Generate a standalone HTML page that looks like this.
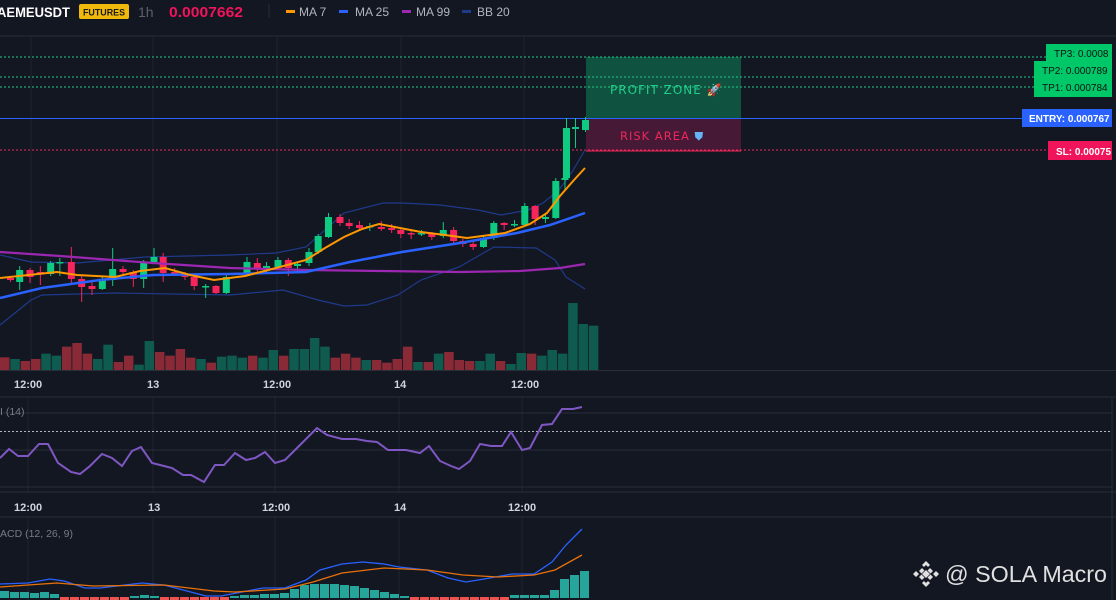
<!DOCTYPE html>
<html><head><meta charset="utf-8"><style>
html,body{margin:0;padding:0;background:#131722;width:1116px;height:600px;overflow:hidden;font-family:"Liberation Sans",sans-serif}
svg{position:absolute;left:0;top:0}
</style></head><body>
<svg id="s" width="1116" height="600" xmlns="http://www.w3.org/2000/svg">
<rect width="1116" height="600" fill="#131722"/>
<line x1="0" y1="36" x2="1116" y2="36" stroke="#2a2e39"/>
<g stroke="#1f2330">
<line x1="31" y1="36" x2="31" y2="370"/><line x1="153" y1="36" x2="153" y2="370"/><line x1="277" y1="36" x2="277" y2="370"/><line x1="401" y1="36" x2="401" y2="370"/><line x1="524" y1="36" x2="524" y2="370"/>
<line x1="28" y1="397" x2="28" y2="492"/><line x1="153" y1="397" x2="153" y2="492"/><line x1="275" y1="397" x2="275" y2="492"/><line x1="399" y1="397" x2="399" y2="492"/><line x1="522" y1="397" x2="522" y2="492"/>
<line x1="28" y1="517" x2="28" y2="600"/><line x1="153" y1="517" x2="153" y2="600"/><line x1="275" y1="517" x2="275" y2="600"/><line x1="399" y1="517" x2="399" y2="600"/><line x1="522" y1="517" x2="522" y2="600"/>
</g>
<line x1="0" y1="397" x2="1116" y2="397" stroke="#2a2e39"/>
<line x1="0" y1="492" x2="1116" y2="492" stroke="#2a2e39"/>
<line x1="0" y1="517" x2="1116" y2="517" stroke="#2a2e39"/>
<line x1="1112" y1="397" x2="1112" y2="600" stroke="#2a2e39"/>
<line x1="0" y1="413" x2="1112" y2="413" stroke="#2a2e39"/>
<line x1="0" y1="450" x2="1112" y2="450" stroke="#2a2e39"/>
<line x1="0" y1="487" x2="1112" y2="487" stroke="#2a2e39"/>
<line x1="0" y1="431.5" x2="1112" y2="431.5" stroke="#b2b5be" stroke-dasharray="2 2" stroke-width="1"/>
<!-- zones -->
<rect x="586" y="57" width="155" height="61" fill="#0f5240"/>
<rect x="586" y="118" width="155" height="33" fill="#461a36"/>
<g stroke-dasharray="2 2">
<line x1="0" y1="57" x2="1046" y2="57" stroke="#26c88a"/>
<line x1="0" y1="77" x2="1034" y2="77" stroke="#26c88a"/>
<line x1="0" y1="87" x2="1034" y2="87" stroke="#26c88a"/>
<line x1="0" y1="150" x2="1048" y2="150" stroke="#f0265a"/>
</g>
<line x1="586" y1="151" x2="741" y2="151" stroke="#f0265a"/>
<line x1="0" y1="118.5" x2="1022" y2="118.5" stroke="#2962ff"/>
<text x="610" y="94" fill="#1fd08a" font-size="12" font-family="DejaVu Sans" letter-spacing="1">PROFIT ZONE 🚀</text>
<text x="620" y="140" fill="#f0265a" font-size="11.5" font-family="DejaVu Sans" letter-spacing="1">RISK AREA <tspan fill="#64b5f6">⛊</tspan></text>
<rect x="1046" y="44" width="66" height="17" fill="#00c868"/>
<rect x="1034" y="61" width="78" height="36" fill="#00c868"/>
<rect x="1022" y="109" width="90" height="18" fill="#2962ff"/>
<rect x="1048" y="141" width="64" height="19" fill="#f0145a"/>
<g font-size="10" fill="#111">
<text x="1054" y="57">TP3: 0.0008</text>
<text x="1042" y="74">TP2: 0.000789</text>
<text x="1042" y="91">TP1: 0.000784</text>
</g>
<g font-size="10" fill="#fff" font-weight="bold">
<text x="1029" y="122">ENTRY: 0.000767</text>
<text x="1056" y="155">SL: 0.00075</text>
</g>
<g id="vol"></g><g id="bb" fill="none" stroke="#1f3a8a" stroke-width="1.2"></g>
<g id="c"></g>
<polyline fill="none" stroke="#9c27b0" stroke-width="2.2" points="0,252 60,256 153,263 230,268 306,270 380,271 459,272 520,271 560,268 585,264"/>
<polyline fill="none" stroke="#2962ff" stroke-width="2.5" points="0,298 42,288 100,280 153,275 230,274 306,272 350,262 402,252 460,243 517,233 550,225 585,213"/>
<polyline fill="none" stroke="#ff9800" stroke-width="2" points="0,278 57,272 77,275 115,277 140,271 165,268 190,275 214,280 245,276 276,268 306,260 325,248 344,237 362,229 379,224 400,228 421,232 445,235 467,238 505,233 530,224 547,213 560,196 574,180 585,168"/>
<polyline fill="none" stroke="#7e57c2" stroke-width="2" points="0,458 9,449 18,456 28,456 39,444 48,444 58,463 71,472 80,474 90,466 102,454 112,458 122,466 132,451 141,447 152,463 164,466 172,468 183,475 191,475 204,482 215,465 224,465 235,453 246,460 255,458 265,452 275,463 285,460 298,447 317,428 327,435 342,439 356,439 367,441 377,442 388,450 406,450 420,453 429,446 440,461 451,466 459,469 470,461 480,444 491,446 502,446 511,432 522,450 530,448 542,425 552,424 562,409 573,409 582,407"/>
<!-- MACD -->
<g id="mh"></g>
<polyline fill="none" stroke="#2962ff" stroke-width="1.3" points="0,584 28,583 50,579 64,581 85,588 100,588 142,583 164,585 206,596 221,596 263,588 285,588 306,580 320,570 342,564 363,562 384,564 399,567 427,570 448,578 466,582 484,579 512,574 534,574 552,562 566,545 582,529"/>
<polyline fill="none" stroke="#e8710a" stroke-width="1.3" points="0,587 28,585 57,583 93,586 164,585 214,591 235,592 285,589 313,582 342,573 384,568 427,570 463,575 498,577 534,575 555,570 582,555"/>
<!-- text -->
<g font-size="11" fill="#d1d4dc" font-weight="bold">
<text x="14" y="388">12:00</text><text x="147" y="388">13</text><text x="263" y="388">12:00</text><text x="394" y="388">14</text><text x="511" y="388">12:00</text>
<text x="14" y="511">12:00</text><text x="148" y="511">13</text><text x="262" y="511">12:00</text><text x="394" y="511">14</text><text x="508" y="511">12:00</text>
</g>
<text x="0" y="415" fill="#787b86" font-size="10.5">I (14)</text>
<text x="0" y="537" fill="#787b86" font-size="10.5">ACD (12, 26, 9)</text>
<g fill="#e0e0e0" transform="translate(926,574)">
<path d="M0,-13 L4,-9 L2,-7 L0,-9 L-2,-7 L-4,-9Z M0,13 L4,9 L2,7 L0,9 L-2,7 L-4,9Z M-13,0 L-10,-3 L-7,0 L-10,3Z M13,0 L10,-3 L7,0 L10,3Z M0,-4 L4,0 L0,4 L-4,0Z M-7,-3 L-4,-6 L-1.5,-3.5 L-4.5,-0.5Z M7,-3 L4,-6 L1.5,-3.5 L4.5,-0.5Z M-7,3 L-4,6 L-1.5,3.5 L-4.5,0.5Z M7,3 L4,6 L1.5,3.5 L4.5,0.5Z"/>
</g>
<text x="945" y="582" fill="#e0e0e0" font-size="23" textLength="162" lengthAdjust="spacingAndGlyphs">@ SOLA Macro</text>
<!-- header -->
<text x="-3" y="17" fill="#ffffff" font-size="14" font-weight="bold" textLength="73" lengthAdjust="spacingAndGlyphs">AEMEUSDT</text>
<rect x="79" y="4" width="50" height="15" rx="2" fill="#f0b90b"/>
<text x="83" y="15.5" fill="#1b1b1b" font-size="9" font-weight="bold" textLength="42" lengthAdjust="spacingAndGlyphs">FUTURES</text>
<text x="138" y="17" fill="#5d606b" font-size="14">1h</text>
<text x="169" y="17" fill="#f0145a" font-size="15" font-weight="bold" textLength="74" lengthAdjust="spacingAndGlyphs">0.0007662</text>
<line x1="269" y1="4" x2="269" y2="18" stroke="#2a2e39"/>
<g font-size="12" fill="#b2b5be">
<rect x="286" y="10" width="9" height="3" fill="#ff9800"/><text x="299" y="16">MA 7</text>
<rect x="339" y="10" width="9" height="3" fill="#2962ff"/><text x="355" y="16">MA 25</text>
<rect x="402" y="10" width="9" height="3" fill="#9c27b0"/><text x="416" y="16">MA 99</text>
<rect x="462" y="10" width="9" height="3" fill="#1e3a8a"/><text x="477" y="16">BB 20</text>
</g>
</svg>
<script>
var NS="http://www.w3.org/2000/svg";
function el(p,t,a){var e=document.createElementNS(NS,t);for(var k in a)e.setAttribute(k,a[k]);document.getElementById(p).appendChild(e);}
var C=[[0,278,280,0,276,282],[8,270,282,1,266,290],[17,270,277,0,268,283],[26,272,274,0,266,285],[35,263,274,1,261,276],[43,262,263,1,258,276],[53,262,279,0,247,283],[62,279,287,0,276,302],[71,286,289,0,282,295],[80,280,289,1,277,290],[89,269,280,1,248,286],[98,269,272,0,266,274],[107,272,279,0,270,287],[116,262,279,1,260,288],[125,257,262,1,248,263],[133,257,273,0,253,282],[143,272,275,0,268,276],[152,275,277,0,272,280],[160,277,286,0,275,290],[170,286,287,1,284,298],[179,286,293,0,285,294],[188,277,293,1,275,294],[206,262,274,1,257,276],[215,263,268,0,258,272],[223,266,268,1,262,272],[233,260,267,1,257,270],[242,260,268,0,258,276],[250,264,266,1,262,272],[260,252,263,1,248,266],[268,236,252,1,234,254],[277,217,237,1,213,238],[287,217,223,0,214,226],[295,223,226,0,219,229],[304,225,228,0,221,231],[313,226,227,1,223,231],[323,227,229,0,221,231],[332,228,230,0,224,233],[340,230,234,0,229,238],[349,233,234,0,231,239],[358,233,234,1,230,236],[367,234,237,0,232,240],[377,230,236,1,222,238],[386,230,241,0,227,244],[394,241,244,0,239,247],[403,244,247,0,241,250],[412,238,247,1,236,248],[421,223,238,1,221,240],[430,223,225,0,222,230],[439,224,225,1,220,227],[448,206,225,1,203,226],[457,206,219,0,205,225],[466,217,219,1,213,223],[475,181,218,1,178,219],[483,178,180,1,176,190]];
C.forEach(function(c){var col=c[3]?"#0ecb81":"#f6255c";var x=c[0]*1.148+7;
el("c","line",{x1:x+3.5,x2:x+3.5,y1:c[4],y2:c[5],stroke:col,"stroke-width":1});
el("c","rect",{x:x,y:c[1],width:7,height:Math.max(1.5,c[2]-c[1]),fill:col});});
[[563,128,178,1,118,180],[572,127,129,1,118,148],[582,120,130,1,117,132]].forEach(function(c){el("c","line",{x1:c[0]+3.5,x2:c[0]+3.5,y1:c[4],y2:c[5],stroke:"#0ecb81"});el("c","rect",{x:c[0],y:c[1],width:7,height:c[2]-c[1],fill:"#0ecb81"});});
var VT="532r 537g 543r 537r 521g 527g 500r 489r 521r 537g 494g 546r 527r 554g 483g 516r 527r 507r 533r 537g 548r 530g 527g 533g 527r 533g 510g 527r 507g 507g 474g 500g 533r 521r 533r 540g 540r 548r 537r 500r 546g 546r 521g 516r 540r 543r 543g 521g 543r 552g 519g 521r 527g 510g 521g 369g 432g 437g".split(" ");
VT.forEach(function(s,i){var t=parseInt(s);var h=(570-t)/3;el("vol","rect",{x:i*10.33,y:370-h,width:9.5,height:h,fill:s.slice(-1)=="g"?"#0f5b4f":"#8b2a37"});});
el("vol","line",{x1:0,x2:1116,y1:370.5,y2:370.5,stroke:"#2a2e39"});
el("bb","polyline",{points:"0,255 31,262 77,263 145,257 230,255 276,253 306,247 344,213 383,203 402,203 440,205 478,210 501,215 528,210 543,203 559,190 572,172 585,150"});
el("bb","polyline",{points:"0,325 31,300 42,295 115,293 230,295 283,290 318,300 344,306 367,305 398,295 421,280 459,267 494,247 536,248 555,260 566,277 585,289"});
var H=[7,6,6,5,6,4,-1,-2,-2,-2,-2,-2,-2,2,3,2,-2,-2,-2,-2,-2,-2,-2,2,3,3,4,4,5,9,13,14,14,14,13,12,10,8,6,4,2,-2,-2,-2,-2,-2,-2,-2,-2,-2,-2,3,3,3,3,8,19,23,27];
H.forEach(function(v,i){var x=i*10;if(v>0)el("mh","rect",{x:x,y:598-v,width:9,height:v,fill:"#26a69a"});else el("mh","rect",{x:x,y:597,width:9,height:3,fill:"#ef5350"});});
</script>
</body></html>
